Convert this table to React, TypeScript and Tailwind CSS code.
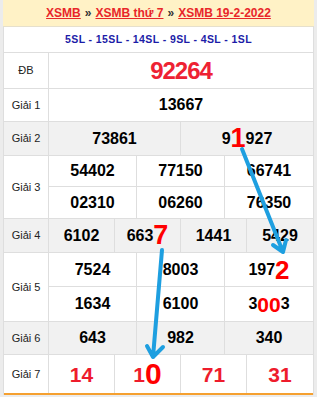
import React from "react";

const B = "border-[#dedede]";

function Num({ children, className = "" }: { children: React.ReactNode; className?: string }) {
  return (
    <div className={`flex items-center justify-center text-[16px] font-bold text-black leading-none ${className}`}>
      {children}
    </div>
  );
}

function Red({ children, size }: { children: React.ReactNode; size: string }) {
  return <span className={`text-[#ff0000] ${size} leading-none`}>{children}</span>;
}

function Label({ children }: { children: React.ReactNode }) {
  return (
    <div className={`w-[45px] shrink-0 border-r ${B} flex items-center justify-center text-[11px] text-[#222]`}>
      {children}
    </div>
  );
}

export default function App() {
  return (
    <div className="relative w-[317px] h-[397px] bg-[#ececec] overflow-hidden font-['Liberation_Sans',Arial,sans-serif]">
      <div className="ml-[3px] w-[311px]">
        <div className="h-[27px] bg-[#fff2c6] flex items-center justify-center text-[12px] font-bold border-b border-[#e6e0cc]">
          <span className="text-[#e8262a] underline">XSMB</span>
          <span className="text-[#333] mx-[4px]">»</span>
          <span className="text-[#e8262a] underline">XSMB thứ 7</span>
          <span className="text-[#333] mx-[4px]">»</span>
          <span className="text-[#e8262a] underline">XSMB 19-2-2022</span>
        </div>
        <div className={`bg-white border-x ${B}`}>
          <div className={`h-[26px] border-b ${B} flex items-center justify-center text-[10.5px] font-bold text-[#1c1ca8] tracking-[0.4px]`}>
            5SL - 15SL - 14SL - 9SL - 4SL - 1SL
          </div>
          {/* DB */}
          <div className={`flex h-[36px] border-b ${B}`}>
            <Label>ĐB</Label>
            <div className="flex-1 flex items-center justify-center">
              <span className="text-[24px] font-bold text-[#ee2233] tracking-[-1px] leading-none">92264</span>
            </div>
          </div>
          {/* G1 */}
          <div className={`flex h-[33px] border-b ${B}`}>
            <Label>Giải 1</Label>
            <Num className="flex-1">13667</Num>
          </div>
          {/* G2 */}
          <div className={`flex h-[34px] border-b ${B} bg-[#f1f1f1]`}>
            <Label>Giải 2</Label>
            <div className="flex-1 grid grid-cols-2">
              <Num className={`border-r ${B}`}>73861</Num>
              <Num>
                9<Red size="text-[27px]">1</Red>927
              </Num>
            </div>
          </div>
          {/* G3 */}
          <div className={`flex h-[63px] border-b ${B}`}>
            <Label>Giải 3</Label>
            <div className="flex-1 flex flex-col">
              <div className={`h-[31px] grid grid-cols-3 border-b ${B}`}>
                <Num className={`border-r ${B}`}>54402</Num>
                <Num className={`border-r ${B}`}>77150</Num>
                <Num>66741</Num>
              </div>
              <div className="flex-1 grid grid-cols-3">
                <Num className={`border-r ${B}`}>02310</Num>
                <Num className={`border-r ${B}`}>06260</Num>
                <Num>76350</Num>
              </div>
            </div>
          </div>
          {/* G4 */}
          <div className={`flex h-[34px] border-b ${B} bg-[#f1f1f1]`}>
            <Label>Giải 4</Label>
            <div className="flex-1 grid grid-cols-4">
              <Num className={`border-r ${B}`}>6102</Num>
              <Num className={`border-r ${B}`}>
                663<Red size="text-[27px]">7</Red>
              </Num>
              <Num className={`border-r ${B}`}>1441</Num>
              <Num>5429</Num>
            </div>
          </div>
          {/* G5 */}
          <div className={`flex h-[69px] border-b ${B}`}>
            <Label>Giải 5</Label>
            <div className="flex-1 flex flex-col">
              <div className={`h-[34px] grid grid-cols-3 border-b ${B}`}>
                <Num className={`border-r ${B}`}>7524</Num>
                <Num className={`border-r ${B}`}>8003</Num>
                <Num>
                  197<Red size="text-[26px]">2</Red>
                </Num>
              </div>
              <div className="flex-1 grid grid-cols-3">
                <Num className={`border-r ${B}`}>1634</Num>
                <Num className={`border-r ${B}`}>6100</Num>
                <Num>
                  3<Red size="text-[21px]">00</Red>3
                </Num>
              </div>
            </div>
          </div>
          {/* G6 */}
          <div className={`flex h-[33px] border-b ${B} bg-[#f1f1f1]`}>
            <Label>Giải 6</Label>
            <div className="flex-1 grid grid-cols-3">
              <Num className={`border-r ${B}`}>643</Num>
              <Num className={`border-r ${B}`}>982</Num>
              <Num>340</Num>
            </div>
          </div>
          {/* G7 */}
          <div className="flex h-[40px] border-b-2 border-b-[#f5a030]">
            <Label>Giải 7</Label>
            <div className="flex-1 grid grid-cols-4 text-[21px] font-bold text-[#ee1c2c] leading-none">
              <div className={`flex items-center justify-center border-r ${B}`}>14</div>
              <div className={`flex items-center justify-center border-r ${B}`}>
                1<span className="text-[30px] text-[#ff0000]">0</span>
              </div>
              <div className={`flex items-center justify-center border-r ${B}`}>71</div>
              <div className="flex items-center justify-center">31</div>
            </div>
          </div>
        </div>
      </div>
      <svg className="absolute left-0 top-0 pointer-events-none" width="317" height="397" viewBox="0 0 317 397">
        <g stroke="#1e9fe0" strokeWidth="4" strokeLinecap="round" strokeLinejoin="round" fill="none">
          <path d="M242 149 L283 252 M273 245 L283 252 L286 240" />
          <path d="M162 250 L153 357 M147 346 L153 357 L163 347" />
        </g>
      </svg>
    </div>
  );
}
